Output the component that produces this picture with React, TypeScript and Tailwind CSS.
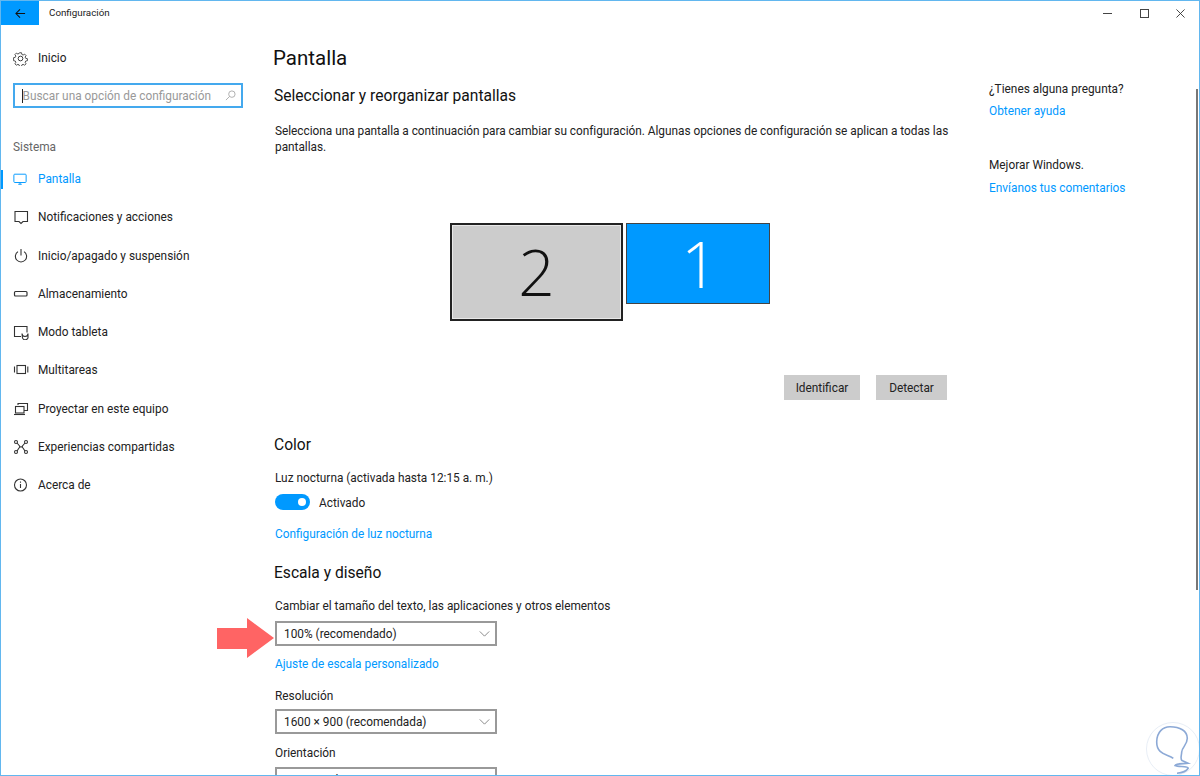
import React from "react";

const I = "w-4 h-4 shrink-0 text-[#333]";
const icons: Record<string, React.ReactNode> = {
  pantalla: (
    <svg viewBox="0 0 16 16" className="w-[14px] h-[14px] shrink-0 text-[#0099ff]" fill="none" stroke="currentColor" strokeWidth="1.1">
      <rect x="1" y="2.5" width="14" height="9.5" rx="1" />
      <path d="M6 14h4M8 12v2" />
    </svg>
  ),
  notif: (
    <svg viewBox="0 0 16 16" className={I} fill="none" stroke="currentColor" strokeWidth="1.1">
      <path d="M2 2.5h12.5v10H10l-2 2-2-2H2z" />
    </svg>
  ),
  power: (
    <svg viewBox="0 0 16 16" className={I} fill="none" stroke="currentColor" strokeWidth="1.1">
      <path d="M5 3.6a5.6 5.6 0 1 0 6 0M8 1v6.5" />
    </svg>
  ),
  storage: (
    <svg viewBox="0 0 16 16" className={I} fill="none" stroke="currentColor" strokeWidth="1.2">
      <rect x="1.5" y="5.5" width="12.5" height="4.5" rx="1" />
    </svg>
  ),
  tablet: (
    <svg viewBox="0 0 16 16" className={I} fill="none" stroke="currentColor" strokeWidth="1.1">
      <path d="M8 12.5H1.5v-10h12.5v6" />
      <path d="M9 9.5a3 3 0 1 0 6 0v3a2.6 2.6 0 0 1-5.6 1z" />
    </svg>
  ),
  multi: (
    <svg viewBox="0 0 16 16" className={I} fill="none" stroke="currentColor" strokeWidth="1.1">
      <rect x="4" y="3.5" width="8.5" height="8" />
      <path d="M1.5 4.5v6M14.8 4.5v6" />
    </svg>
  ),
  project: (
    <svg viewBox="0 0 16 16" className={I} fill="none" stroke="currentColor" strokeWidth="1.1">
      <path d="M5 4V2.5h9.5v7H11" />
      <rect x="2.5" y="5.5" width="8.5" height="6.5" />
      <path d="M1 13.5h11" />
    </svg>
  ),
  shared: (
    <svg viewBox="0 0 16 16" className={I} fill="none" stroke="currentColor" strokeWidth="1.1">
      <circle cx="3" cy="3" r="1.5" />
      <circle cx="13" cy="3" r="1.5" />
      <circle cx="3" cy="13" r="1.5" />
      <circle cx="13" cy="13" r="1.5" />
      <path d="M4 4l3 3.5-3 4.5M12 4L9 7.500l3 4.500M6 8h4" />
    </svg>
  ),
  info: (
    <svg viewBox="0 0 16 16" className={I} fill="none" stroke="currentColor" strokeWidth="1.1">
      <circle cx="7.500" cy="8" r="6" />
      <path d="M7.500 7v4M7.500 4.500v1.200" />
    </svg>
  ),
};

const items: { k: string; t: string; active?: boolean }[] = [
  { k: "pantalla", t: "Pantalla", active: true },
  { k: "notif", t: "Notificaciones y acciones" },
  { k: "power", t: "Inicio/apagado y suspensión" },
  { k: "storage", t: "Almacenamiento" },
  { k: "tablet", t: "Modo tableta" },
  { k: "multi", t: "Multitareas" },
  { k: "project", t: "Proyectar en este equipo" },
  { k: "shared", t: "Experiencias compartidas" },
  { k: "info", t: "Acerca de" },
];

function Select({ text }: { text: string }) {
  return (
    <div className="w-[222px] h-[25px] border-2 border-[#999] flex items-center justify-between pl-[7px] pr-[5px] text-[#222]">
      <span>{text}</span>
      <svg viewBox="0 0 12 7" className="w-[11px] h-[6px] text-[#777]" fill="none" stroke="currentColor" strokeWidth="1">
        <path d="M0.500 0.500l5.500 5.500L11.500 0.500" />
      </svg>
    </div>
  );
}

export default function App() {
  return (
    <div
      className="w-[1200px] h-[776px] overflow-hidden bg-white border border-[#62b7ef] flex flex-col text-[11.850px] leading-[16px] text-[#222] relative"
      style={{ fontFamily: 'Roboto, "Noto Sans", sans-serif' }}
    >
      <header className="h-[24px] shrink-0 flex items-center">
        <div className="w-[38px] h-[24px] bg-[#0099ff] flex items-center justify-center">
          <svg viewBox="0 0 12 12" className="w-[11px] h-[11px] text-[#111]" fill="none" stroke="currentColor" strokeWidth="1.100">
            <path d="M11 6H1M5.500 1.500L1 6l4.500 4.500" />
          </svg>
        </div>
        <span className="ml-[10px] text-[9.800px] text-[#222]">Configuración</span>
        <div className="ml-auto flex items-center gap-[27px] pr-[14px] text-[#333]">
          <span className="w-[9px] h-[1px] bg-[#444]" />
          <span className="w-[9px] h-[9px] border border-[#444] ml-[1px]" />
          <svg viewBox="0 0 10 10" className="w-[9px] h-[9px]" fill="none" stroke="currentColor" strokeWidth="1">
            <path d="M0.500 0.500l9 9M9.500 0.500l-9 9" />
          </svg>
        </div>
      </header>

      <div className="flex flex-1 min-h-0">
        <aside className="w-[272px] shrink-0">
          <div className="flex items-center h-[16px] mt-[25px] pl-[12px]">
            <svg viewBox="0 0 16 16" className="w-[15px] h-[15px] text-[#333]" fill="none" stroke="currentColor" strokeWidth="1">
              <circle cx="8" cy="8" r="2.500" />
              <path d="M6.800 1.200h2.400l.4 2 1.500.7 1.800-1.100 1.700 1.700-1.100 1.800.7 1.500 2 .4v2.400l-2 .4-.7 1.500 1.100 1.800-1.700 1.700-1.800-1.100-1.500.7-.4 2H6.800l-.4-2-1.500-.7-1.800 1.100-1.700-1.700 1.100-1.800-.7-1.500-2-.4V7l2-.4.7-1.500-1.100-1.800 1.700-1.700 1.800 1.100 1.500-.7z" transform="translate(0.800 0.800) scale(0.900)" />
            </svg>
            <span className="ml-[10px]">Inicio</span>
          </div>
          <div className="ml-[12px] mt-[17px] w-[230px] h-[25px] border-2 border-[#44a9ee] flex items-center justify-between pr-[5px] text-[#999]">
            <span className="flex items-center whitespace-nowrap">
              <span className="w-[1px] h-[14px] bg-[#222] ml-[7px]" />
              <span className="-ml-[0.500px]">Buscar una opción de configuración</span>
            </span>
            <svg viewBox="0 0 12 12" className="w-[11px] h-[11px] text-[#aaa]" fill="none" stroke="currentColor" strokeWidth="1">
              <circle cx="7.500" cy="4.500" r="3.500" />
              <path d="M5 7l-4 4" />
            </svg>
          </div>
          <div className="mt-[31px] ml-[12px] text-[#666] h-[16px]">Sistema</div>
          <nav className="mt-[5px]">
            {items.map((it) => (
              <div key={it.t} className="h-[38.250px] flex items-center relative pl-[12px]">
                {it.active && <span className="absolute -left-px top-[10px] w-[3px] h-[19px] bg-[#0099ff]" />}
                <span className="w-[25px] shrink-0 flex items-center">{icons[it.k]}</span>
                <span className={it.active ? "text-[#0099ff]" : "text-[#222]"}>{it.t}</span>
              </div>
            ))}
          </nav>
        </aside>

        <main className="w-[680px] shrink-0 pt-[18px] overflow-hidden">
          <h1 className="text-[20.500px] leading-[30px] text-[#111]">Pantalla</h1>
          <h2 className="mt-[12px] text-[15.600px] leading-[22px] text-[#111] pl-[1px]">Seleccionar y reorganizar pantallas</h2>
          <p className="mt-[16px] pl-[2px] leading-[16px] w-[680px] tracking-[-0.025px]">
            Selecciona una pantalla a continuación para cambiar su configuración. Algunas opciones de configuración se aplican a todas las pantallas.
          </p>
          <div className="mt-[68px] ml-[177px] flex items-start gap-[3px] h-[98px]">
            <div className="w-[173px] h-[98px] bg-[#cccccc] border-2 border-[#222] outline-1 -outline-offset-3 outline-[#e8e8e8] flex items-center justify-center text-[64px] leading-none font-light text-[#111]" style={{ fontFamily: '"Open Sans", sans-serif' }}>2</div>
            <div className="w-[144px] h-[81px] bg-[#0099ff] border-[1.500px] border-[#444] flex items-center justify-center pl-[3px] text-[64px] leading-none font-light text-white" style={{ fontFamily: '"Open Sans", sans-serif' }}>1</div>
          </div>
          <div className="mt-[54px] flex justify-end gap-[16px] w-[674px]">
            <div className="w-[76px] h-[25px] bg-[#cccccc] flex items-center justify-center">Identificar</div>
            <div className="w-[71px] h-[25px] bg-[#cccccc] flex items-center justify-center">Detectar</div>
          </div>
          <h2 className="mt-[34px] text-[15.600px] leading-[22px] pl-[1px] text-[#111]">Color</h2>
          <p className="mt-[14px] pl-[2px]">Luz nocturna (activada hasta 12:15 a. m.)</p>
          <div className="mt-[8px] pl-[2px] flex items-center h-[16px]">
            <span className="w-[35px] h-[16px] rounded-full bg-[#0099ff] flex items-center justify-end pr-[4px]">
              <span className="w-[8px] h-[8px] rounded-full bg-white" />
            </span>
            <span className="ml-[9px] mt-[2px]">Activado</span>
          </div>
          <p className="mt-[16px] pl-[2px] text-[#0099ff]">Configuración de luz nocturna</p>
          <h2 className="mt-[20px] text-[15.600px] leading-[22px] pl-[1px] text-[#111]">Escala y diseño</h2>
          <p className="mt-[14px] pl-[2px]">Cambiar el tamaño del texto, las aplicaciones y otros elementos</p>
          <div className="mt-[7px] pl-[2px]"><Select text="100% (recomendado)" /></div>
          <p className="mt-[10px] pl-[2px] text-[#0099ff]">Ajuste de escala personalizado</p>
          <p className="mt-[16px] pl-[2px]">Resolución</p>
          <div className="mt-[5px] pl-[2px]"><Select text="1600 × 900 (recomendada)" /></div>
          <p className="mt-[11px] pl-[2px]">Orientación</p>
          <div className="mt-[6px] pl-[2px]"><Select text="Horizontal" /></div>
        </main>

        <section className="ml-[36px] pt-[56px] w-[200px]">
          <p className="text-[#222]">¿Tienes alguna pregunta?</p>
          <p className="mt-[6px] text-[#0099ff]">Obtener ayuda</p>
          <p className="mt-[38px] text-[#222]">Mejorar Windows.</p>
          <p className="mt-[7px] text-[#0099ff]">Envíanos tus comentarios</p>
        </section>
      </div>

      {/* annotation arrow */}
      <svg viewBox="0 0 57 40" className="absolute left-[216px] top-[617px] w-[57px] h-[40px]">
        <path d="M0 10h30V0l27 20-27 20V31H0z" fill="#ff6464" />
      </svg>
      {/* scrollbar thumb */}
      <span className="absolute right-[1px] top-[88px] w-[2px] h-[501px] bg-[#777]" />
      {/* watermark */}
      <svg viewBox="0 0 54 54" className="absolute -right-px -bottom-px w-[54px] h-[54px]" fill="none">
        <circle cx="27" cy="27" r="26.500" stroke="#e8eef6" strokeWidth="1" />
        <path d="M27.300 36.300C22 32 10.700 33 10.700 20C10.700 10 17 4.700 24 4.700C34 4.700 41.300 9 41.300 16.300C41.300 23 36 25 35.700 30C35.500 34 34 37 36 38.500L42.300 41.300C38 42 30 41 29 43.500C32 45 42 44 42.300 46C40 50 35 51 31 51.300" stroke="#8ca9d6" strokeWidth="1.600" />
      </svg>
    </div>
  );
}
